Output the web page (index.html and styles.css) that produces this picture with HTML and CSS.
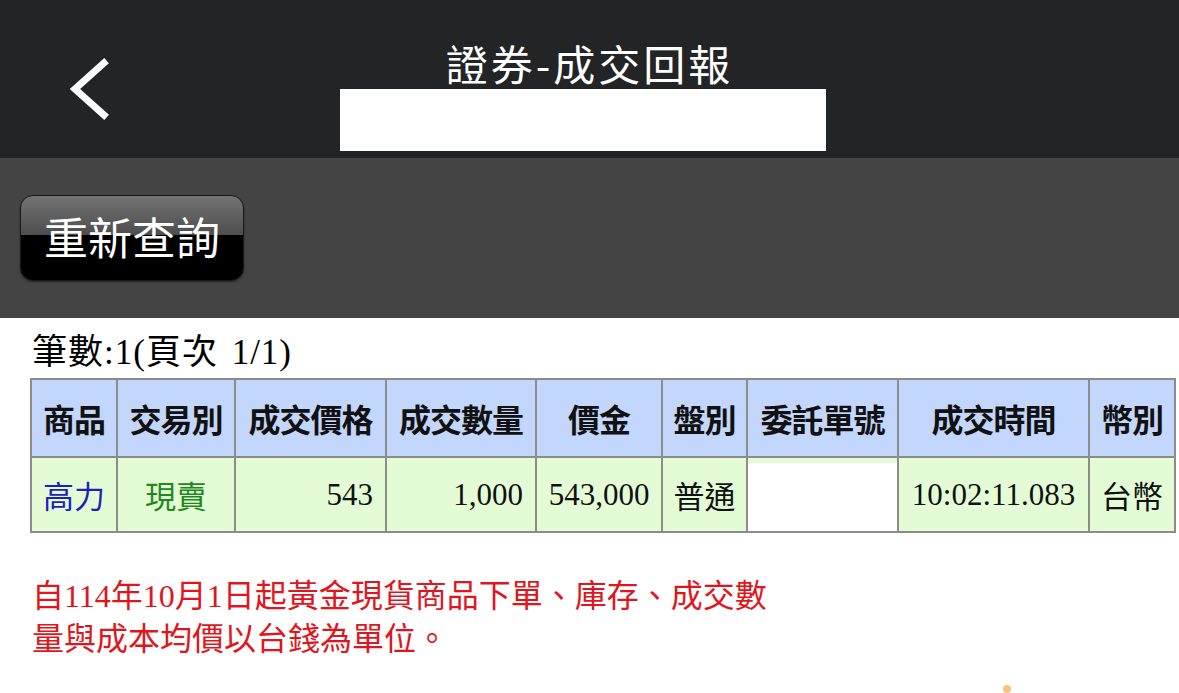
FILE: index.html
```html
<!DOCTYPE html>
<html lang="zh-Hant">
<head>
<meta charset="utf-8">
<title>證券-成交回報</title>
<link rel="stylesheet" href="styles.css">
</head>
<body>
<header class="topbar">
  <a class="back" aria-label="返回">
    <svg width="48" height="70" viewBox="0 0 48 70"><polyline points="37,5 8,31 37,57" fill="none" stroke="#fff" stroke-width="7" stroke-linecap="square"/></svg>
  </a>
  <h1 class="title">證券-成交回報</h1>
  <div class="account"></div>
</header>
<section class="toolbar">
  <button class="btn">重新查詢</button>
</section>
<main class="content">
  <div class="summary">筆數:1(頁次 1/1)</div>
  <table class="grid">
    <colgroup>
      <col style="width:86px"><col style="width:118px"><col style="width:151px"><col style="width:150px"><col style="width:126px"><col style="width:85px"><col style="width:151px"><col style="width:191px"><col style="width:86px">
    </colgroup>
    <thead>
      <tr>
        <th>商品</th><th>交易別</th><th>成交價格</th><th>成交數量</th><th>價金</th><th>盤別</th><th>委託單號</th><th>成交時間</th><th>幣別</th>
      </tr>
    </thead>
    <tbody>
      <tr>
        <td class="c name">高力</td>
        <td class="c side">現賣</td>
        <td class="r num">543</td>
        <td class="r num">1,000</td>
        <td class="c num">543,000</td>
        <td class="c">普通</td>
        <td class="redact"></td>
        <td class="c num">10:02:11.083</td>
        <td class="c">台幣</td>
      </tr>
    </tbody>
  </table>
  <p class="notice">自114年10月1日起黃金現貨商品下單、庫存、成交數<br>量與成本均價以台錢為單位。</p>
  <span class="dot"></span>
</main>
</body>
</html>
```
FILE: styles.css
```css
html, body {
  margin: 0;
  padding: 0;
  background: #ffffff;
  font-family: "Noto Sans CJK TC", "Noto Sans", sans-serif;
}
body {
  position: relative;
  height: 693px;
  overflow: hidden;
}
.topbar {
  position: relative;
  height: 158px;
  background: #222426;
  box-sizing: border-box;
  padding-top: 38px;
  display: flex;
  flex-direction: column;
  align-items: center;
}
.back {
  position: absolute;
  left: 67px;
  top: 58px;
  display: block;
  width: 48px;
  height: 70px;
}
.title {
  margin: 0;
  color: #ffffff;
  font-size: 42px;
  line-height: 50px;
  font-weight: 400;
  letter-spacing: 3px;
}
.account {
  margin-top: 1px;
  margin-right: 14px;
  width: 486px;
  height: 62px;
  background: #ffffff;
}
.toolbar {
  height: 160px;
  background: #444444;
  box-sizing: border-box;
  padding: 37px 0 0 20px;
}
.btn {
  display: block;
  width: 224px;
  height: 86px;
  border-radius: 13px;
  border: 1px solid #1a1a1a;
  box-shadow: 0 1px 2px rgba(0,0,0,0.5);
  background: linear-gradient(to bottom, #737373 0%, #4e4e4e 46%, #000000 47%, #000000 100%);
  color: #ffffff;
  font-family: "Noto Sans CJK TC", sans-serif;
  font-size: 44px;
  line-height: 1;
  padding: 0 0 4px 0;
  letter-spacing: 0;
}
.content {
  padding: 15px 0 0 30px;
}
.summary {
  font-family: "Liberation Serif", "Noto Sans CJK TC", serif;
  font-size: 35px;
  line-height: 40px;
  padding-left: 2px;
  color: #000;
  margin-bottom: 5px;
  letter-spacing: 1px;
  word-spacing: 4px;
}
.grid {
  table-layout: fixed;
  width: 1146px;
  border-collapse: collapse;
  border: 2px solid #8c8c8c;
}
.grid th, .grid td {
  border: 2px solid #8c8c8c;
  padding: 0 12px;
  white-space: nowrap;
}
.grid th {
  height: 76px;
  background: #c3d6fb;
  font-size: 32px;
  font-weight: 700;
  color: #111;
  text-align: center;
  padding: 0 2px;
  letter-spacing: -1px;
}
.grid td {
  height: 73px;
  background: #e3fcd5;
  font-size: 31px;
  color: #111;
}
.grid td.c { text-align: center; padding: 0 2px; }
.grid td.r { text-align: right; }
.grid td.num {
  font-family: "Liberation Serif", serif;
  font-size: 31px;
}
.grid td.name { color: #1f1fbf; }
.grid td.side { color: #1e8a1e; }
.grid td.redact {
  background: #ffffff;
  box-shadow: inset 0 5px 0 #e3fcd5;
}
.notice {
  margin: 42px 0 0 2px;
  color: #e0161c;
  font-family: "Liberation Serif", "Noto Sans CJK TC", serif;
  font-size: 32px;
  line-height: 43px;
}
.dot {
  position: absolute;
  left: 1003px;
  top: 685px;
  width: 8px;
  height: 8px;
  border-radius: 50%;
  background: #fbc37a;
}
```
